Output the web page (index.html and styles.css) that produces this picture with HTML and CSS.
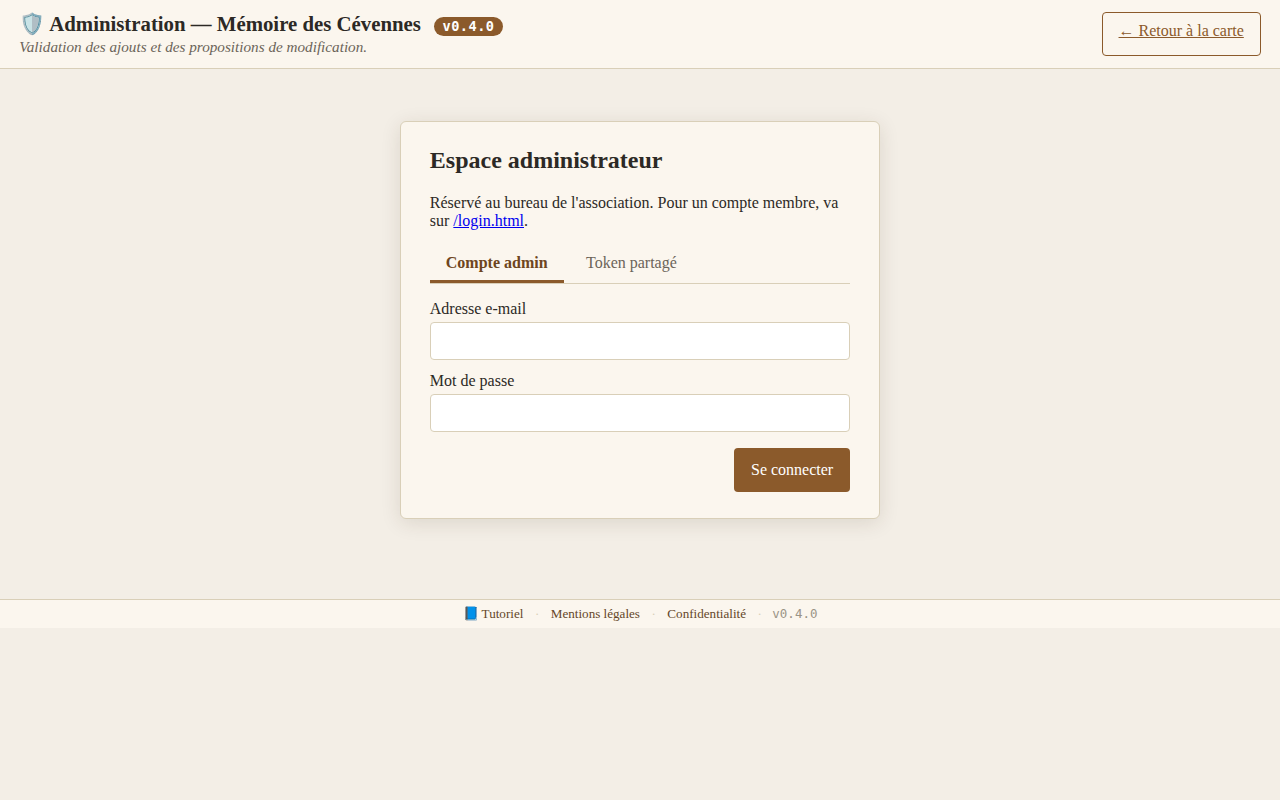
FILE: index.html
```html
<!DOCTYPE html>
<html lang="fr">
<head>
<meta charset="utf-8">
<title>Administration — Mémoire des Cévennes</title>
<link rel="stylesheet" href="styles.css">
</head>
<body>
<header class="topbar">
  <div class="topbar-text">
    <h1 class="title">🛡️ Administration — Mémoire des Cévennes <span class="badge">v0.4.0</span></h1>
    <p class="subtitle">Validation des ajouts et des propositions de modification.</p>
  </div>
  <a class="back" href="#">← Retour à la carte</a>
</header>
<main class="main">
  <section class="card">
    <h2 class="card-title">Espace administrateur</h2>
    <p class="intro">Réservé au bureau de l'association. Pour un compte membre, va sur <a href="#">/login.html</a>.</p>
    <div class="tabs">
      <button class="tab tab-active" type="button">Compte admin</button>
      <button class="tab" type="button">Token partagé</button>
    </div>
    <form class="form">
      <label class="label" for="email">Adresse e-mail</label>
      <input class="input" id="email" type="email">
      <label class="label" for="password">Mot de passe</label>
      <input class="input" id="password" type="password">
      <div class="actions">
        <button class="submit" type="button">Se connecter</button>
      </div>
    </form>
  </section>
</main>
<footer class="footer">
  <a href="#">📘 Tutoriel</a><span class="sep">·</span><a href="#">Mentions légales</a><span class="sep">·</span><a href="#">Confidentialité</a><span class="sep">·</span><span class="version">v0.4.0</span>
</footer>
</body>
</html>
```
FILE: styles.css
```css
* { box-sizing: border-box; }
html, body { margin: 0; padding: 0; }
body {
  background: #f3eee6;
  color: #2c2925;
  font-family: "Liberation Serif", "Times New Roman", serif;
  font-size: 16px;
}
.topbar {
  display: flex;
  justify-content: space-between;
  align-items: center;
  height: 69px;
  padding: 0 19.2px;
  background: #fbf6ee;
  border-bottom: 1px solid #d9cfb8;
}
.topbar-text { margin-top: -2px; }
.title {
  margin: 0;
  font-size: 20.8px;
  line-height: 24px;
  font-weight: 700;
}
.badge {
  display: inline-block;
  margin-left: 8px;
  padding: 1px 8.4px;
  border-radius: 10px;
  background: #8b5a2b;
  color: #fff;
  font-family: "DejaVu Sans Mono", monospace;
  font-size: 13.6px;
  letter-spacing: 0.5px;
  line-height: 17px;
  vertical-align: 0;
}
.subtitle {
  margin: 2px 0 0;
  color: #6b6459;
  font-size: 15.2px;
  font-style: italic;
  line-height: 17px;
}
.back {
  display: block;
  padding: 5.6px 16px 13.6px;
  border: 1px solid #8b5a2b;
  border-radius: 4px;
  color: #8b5a2b;
  line-height: 23px;
}
.main {
  display: flex;
  justify-content: center;
  padding: 52px 0 80px;
}
.card {
  width: 480px;
  padding: 28.8px 28.8px 26px;
  background: #fbf6ee;
  border: 1px solid #d9cfb8;
  border-radius: 6px;
  box-shadow: 0 4px 20px rgba(60, 40, 20, 0.12);
}
.card-title {
  margin: -1px 0 24px;
  font-size: 24px;
  line-height: 20px;
}
.intro { margin: 0 0 16px; line-height: 18px; }
.tabs {
  display: flex;
  gap: 6.4px;
  border-bottom: 1px solid #d9cfb8;
  margin-bottom: 16px;
}
.tab {
  padding: 8px 16px;
  background: none;
  border: 0;
  border-bottom: 3px solid transparent;
  color: #6b6459;
  font: inherit;
  line-height: 18px;
}
.tab-active { border-bottom-color: #8b5a2b; color: #6e4520; font-weight: 700; }
.form { display: flex; flex-direction: column; }
.label { line-height: 18px; margin-bottom: 4px; }
.input {
  height: 38px;
  margin-bottom: 12px;
  background: #fff;
  border: 1px solid #d9cfb8;
  border-radius: 4px;
}
.actions { display: flex; justify-content: flex-end; margin-top: 4px; }
.submit {
  height: 44px;
  padding: 0 17px;
  background: #8b5a2b;
  border: 0;
  border-radius: 4px;
  color: #fff;
  font: inherit;
}
.footer {
  display: flex;
  justify-content: center;
  align-items: center;
  height: 29px;
  background: #fbf6ee;
  border-top: 1px solid #d9cfb8;
  font-size: 13.12px;
}
.footer a { color: #654729; text-decoration: none; }
.sep { color: #d9cfb8; margin: 0 11.5px; }
.version {
  margin-left: -1px;
  color: #9a9486;
  font-family: "DejaVu Sans Mono", monospace;
  font-size: 12.48px;
}
```
